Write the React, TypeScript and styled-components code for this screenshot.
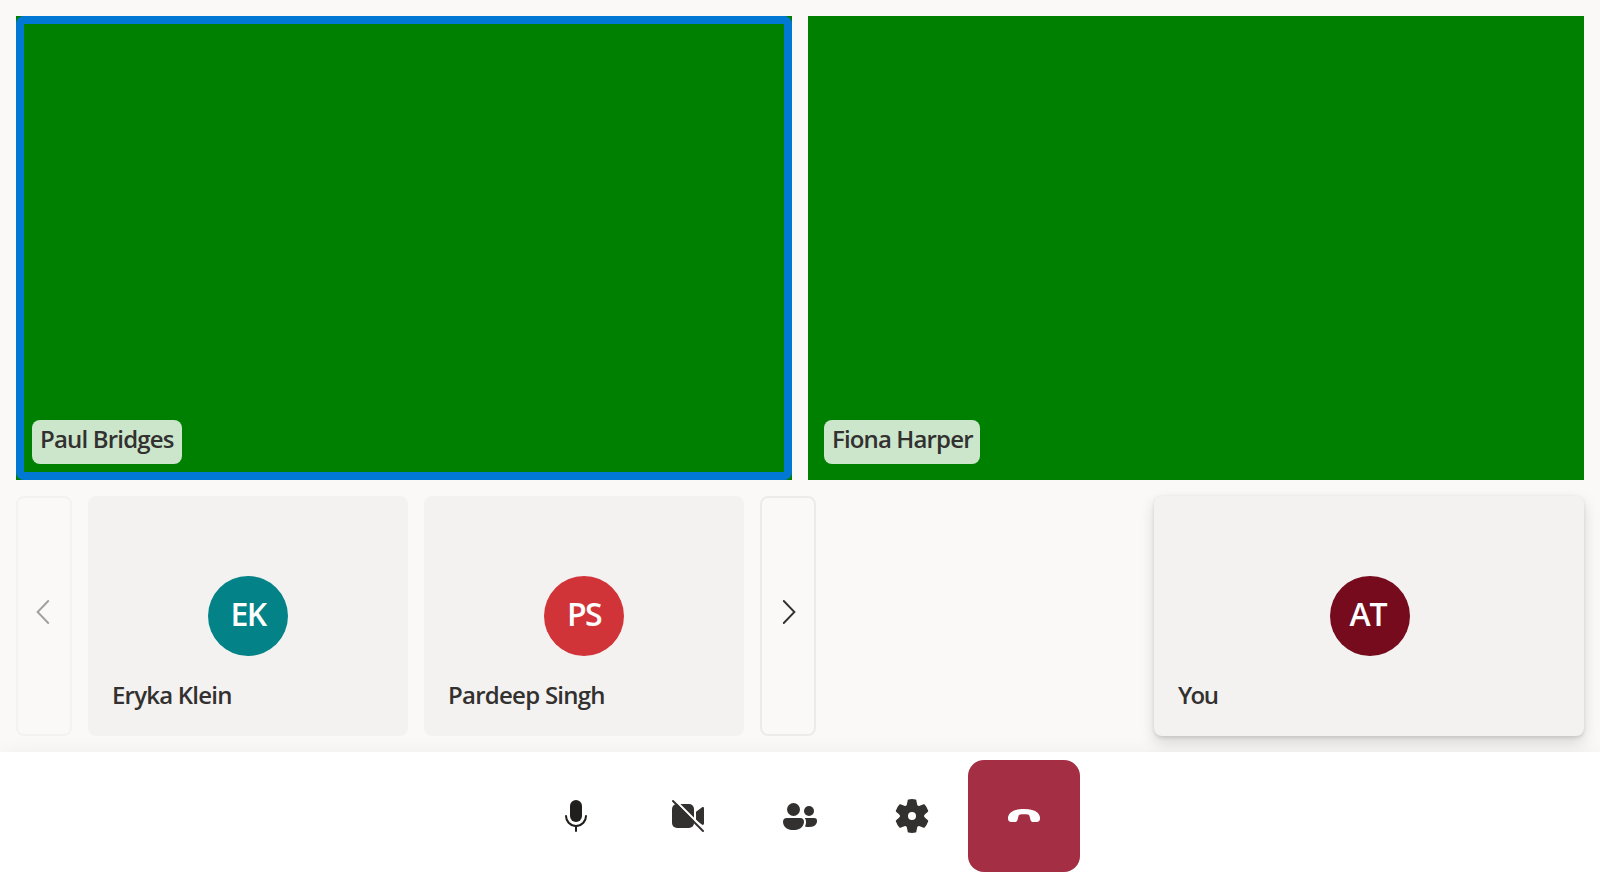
import React from "react";
import styled, { createGlobalStyle } from "styled-components";

const GlobalStyle = createGlobalStyle`
  * { box-sizing: border-box; }
  body {
    margin: 0;
    background: #faf9f8;
    color: #323130;
    font-family: "Segoe UI", "Open Sans", "Noto Sans", sans-serif;
    font-weight: 600;
  }
`;

const Screen = styled.div`
  display: flex;
  flex-direction: column;
  height: 880px;
  overflow: hidden;
`;

const Stage = styled.main`
  display: flex;
  flex-direction: column;
  gap: 16px;
  height: 752px;
  padding: 16px;
`;

const VideoGrid = styled.section`
  display: grid;
  grid-template-columns: 1fr 1fr;
  gap: 16px;
  height: 464px;
`;

const VideoTile = styled.article`
  display: flex;
  align-items: flex-end;
  position: relative;
  padding: 16px;
  background: #008000;
`;

const SpeakingRing = styled.span`
  position: absolute;
  inset: 0;
  border: 8px solid #0078d4;
  border-radius: 8px;
`;

const Text = styled.span<{ $width: number; $spacing: number }>`
  display: block;
  width: ${(p) => p.$width}px;
  font-size: 24px;
  line-height: 32px;
  letter-spacing: ${(p) => p.$spacing}px;
  white-space: nowrap;
`;

const NameChip = styled.div`
  height: 44px;
  padding: 3px 8px 9px;
  border-radius: 8px;
  background: rgba(255, 255, 255, 0.8);
`;

const Gallery = styled.section`
  display: flex;
  gap: 16px;
  height: 240px;
`;

const PageButton = styled.button<{ $muted?: boolean }>`
  display: flex;
  align-items: center;
  justify-content: center;
  width: 56px;
  padding: ${(p) => (p.$muted ? "0 2px 8px 0" : "0 0 8px 2px")};
  border: 2px solid ${(p) => (p.$muted ? "#f3f2f1" : "#edebe9")};
  border-radius: 8px;
  background: transparent;
  color: ${(p) => (p.$muted ? "#a19f9d" : "#323130")};
`;

const PersonTile = styled.article`
  display: grid;
  grid-template-rows: 80px 80px 80px;
  justify-items: center;
  width: 320px;
  border-radius: 8px;
  background: #f3f2f1;
`;

const Avatar = styled.div<{ $color: string }>`
  grid-row: 2;
  width: 80px;
  height: 80px;
  border-radius: 50%;
  background: ${(p) => p.$color};
  color: #fff;
  font-size: 32px;
  line-height: 75px;
  letter-spacing: -1.6px;
  text-align: center;
`;

const SelfTile = styled(PersonTile)`
  width: 430px;
  margin-left: auto;
  box-shadow: 0 6.4px 14.4px rgba(0, 0, 0, 0.132), 0 1.2px 3.6px rgba(0, 0, 0, 0.108);

  ${Avatar} {
    margin-left: 2px;
    padding-right: 4px;
    letter-spacing: -1px;
  }
`;

const PersonName = styled.div`
  grid-row: 3;
  justify-self: start;
  padding: 23px 24px 0;
`;

const ControlBar = styled.footer`
  display: flex;
  justify-content: center;
  position: relative;
  height: 128px;
  padding: 8px;
  background: #fff;
  box-shadow: 0 12.8px 28.8px rgba(0, 0, 0, 0.132);
`;

const ControlButton = styled.button<{ $danger?: boolean }>`
  display: flex;
  align-items: center;
  justify-content: center;
  width: 112px;
  height: 112px;
  padding: 0;
  border: 0;
  border-radius: 16px;
  background: ${(p) => (p.$danger ? "#a42e43" : "transparent")};
  color: ${(p) => (p.$danger ? "#fff" : "#323130")};
`;

const Icon = ({ children, color = "currentColor" }: { children: React.ReactNode; color?: string }) => (
  <svg width="40" height="40" viewBox="0 0 20 20" fill={color}>
    {children}
  </svg>
);

const Chevron = ({ left }: { left?: boolean }) => (
  <svg width="16" height="26" viewBox="0 0 16 26" fill="none" stroke="currentColor" strokeWidth="1.9" strokeLinecap="round">
    <path d={left ? "M13.2 2 L2.6 13 L13.2 24" : "M2.8 2 L13.4 13 L2.8 24"} />
  </svg>
);

type Person = { name: string; initials: string; color: string; width: number; spacing: number };

const people: Person[] = [
  { name: "Eryka Klein", initials: "EK", color: "#038387", width: 120, spacing: -0.78 },
  { name: "Pardeep Singh", initials: "PS", color: "#d13438", width: 158, spacing: -0.74 },
];

export default function App() {
  return (
    <>
      <GlobalStyle />
      <Screen>
        <Stage>
          <VideoGrid>
            <VideoTile>
              <SpeakingRing />
              <NameChip>
                <Text $width={134} $spacing={-0.82}>Paul Bridges</Text>
              </NameChip>
            </VideoTile>
            <VideoTile>
              <NameChip>
                <Text $width={140} $spacing={-0.86}>Fiona Harper</Text>
              </NameChip>
            </VideoTile>
          </VideoGrid>
          <Gallery>
            <PageButton $muted aria-label="Previous"><Chevron left /></PageButton>
            {people.map((p) => (
              <PersonTile key={p.name}>
                <Avatar $color={p.color}>{p.initials}</Avatar>
                <PersonName>
                  <Text $width={p.width} $spacing={p.spacing}>{p.name}</Text>
                </PersonName>
              </PersonTile>
            ))}
            <PageButton aria-label="Next"><Chevron /></PageButton>
            <SelfTile>
              <Avatar $color="#750b1c">AT</Avatar>
              <PersonName>
                <Text $width={40} $spacing={-1.6}>You</Text>
              </PersonName>
            </SelfTile>
          </Gallery>
        </Stage>
        <ControlBar>
          <ControlButton aria-label="Microphone">
            <Icon color="#201f1e">
              <path d="M10 13a3 3 0 0 0 3-3V5a3 3 0 0 0-6 0v5a3 3 0 0 0 3 3Z" />
              <path d="M5 9.5a.5.5 0 0 1 .5.5 4.5 4.5 0 0 0 9 0 .5.5 0 0 1 1 0 5.5 5.5 0 0 1-5 5.48v2.02a.5.5 0 0 1-1 0v-2.02A5.5 5.5 0 0 1 4.5 10a.5.5 0 0 1 .5-.5Z" />
            </Icon>
          </ControlButton>
          <ControlButton aria-label="Camera">
            <Icon>
              <rect x="2" y="4" width="11" height="12" rx="2.5" />
              <path d="M14 7.9l2.9-2.2c.5-.4 1.1-.1 1.1.5v7.6c0 .6-.6.9-1.1.5L14 12.1Z" />
              <path d="M3.4 2 L18.6 17.2" stroke="#fff" strokeWidth="1.1" />
              <path d="M2.5 2.5 L17.5 17.5" stroke="currentColor" strokeLinecap="round" />
            </Icon>
          </ControlButton>
          <ControlButton aria-label="People">
            <Icon>
              <circle cx="6.75" cy="6.75" r="3.25" />
              <circle cx="14.5" cy="7.5" r="2.5" />
              <path d="M1.5 13a2 2 0 0 1 2-2H10a2 2 0 0 1 2 2s0 4-5.25 4S1.5 13 1.5 13Z" />
              <path d="M12.3 11H17a1.5 1.5 0 0 1 1.5 1.6s0 2.9-4 2.9c-.8 0-1.4-.1-2-.3.4-.8.5-1.5.5-2.2 0-.8-.2-1.5-.7-2Z" />
            </Icon>
          </ControlButton>
          <ControlButton aria-label="Settings">
            <Icon>
              <path fillRule="evenodd" d="M1.91 7.38A8.5 8.5 0 0 1 3.7 4.3a.5.5 0 0 1 .54-.13l1.92.68a1 1 0 0 0 1.32-.76l.36-2a.5.5 0 0 1 .4-.4 8.53 8.53 0 0 1 3.55 0c.2.04.35.2.38.4l.37 2a1 1 0 0 0 1.32.76l1.92-.68a.5.5 0 0 1 .54.13 8.5 8.5 0 0 1 1.78 3.08c.06.2 0 .4-.15.54l-1.56 1.32a1 1 0 0 0 0 1.52l1.56 1.32a.5.5 0 0 1 .15.54 8.5 8.5 0 0 1-1.78 3.08.5.5 0 0 1-.54.13l-1.92-.68a1 1 0 0 0-1.32.76l-.37 2a.5.5 0 0 1-.38.4 8.53 8.53 0 0 1-3.56 0 .5.5 0 0 1-.39-.4l-.36-2a1 1 0 0 0-1.32-.76l-1.92.68a.5.5 0 0 1-.54-.13 8.5 8.5 0 0 1-1.78-3.08.5.5 0 0 1 .15-.54l1.56-1.32a1 1 0 0 0 0-1.52L2.06 7.92a.5.5 0 0 1-.15-.54ZM10 12a2 2 0 1 0 0-4 2 2 0 0 0 0 4Z" />
            </Icon>
          </ControlButton>
          <ControlButton $danger aria-label="Leave">
            <Icon>
              <path d="M10 6.5c3.2 0 5.4.6 6.8 1.9.9.9 1.3 2 1.2 3.1-.1 1-.7 1.5-1.7 1.5h-1.500c-.9 0-1.400-.4-1.600-1.300l-.4-1.500c-.1-.5-.4-.8-.9-.9-.6-.2-1.200-.2-1.900-.2s-1.300 0-1.900.2c-.5.1-.8.4-.9.9l-.4 1.500c-.2.9-.7 1.300-1.600 1.300H3.700c-1 0-1.600-.5-1.700-1.500-.1-1.100.3-2.200 1.200-3.100C4.600 7.100 6.800 6.500 10 6.500Z" />
            </Icon>
          </ControlButton>
        </ControlBar>
      </Screen>
    </>
  );
}
